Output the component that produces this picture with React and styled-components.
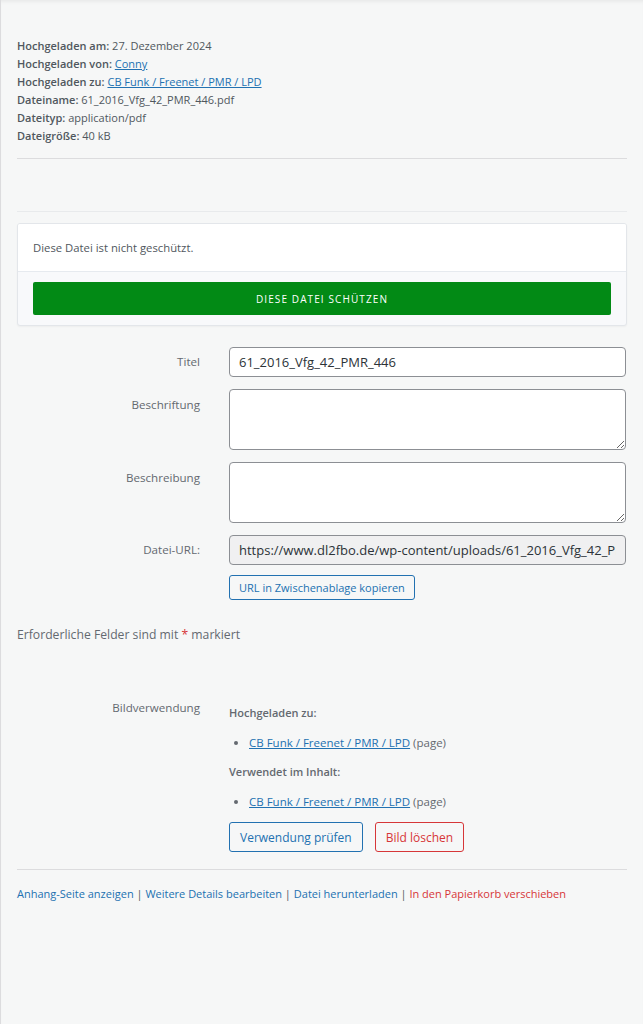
import styled, { createGlobalStyle } from 'styled-components'

const GlobalStyle = createGlobalStyle`
  html, body {
    margin: 0;
    background: #f6f7f7;
    font-family: "Open Sans", "Noto Sans", sans-serif;
    color: #3c434a;
  }
`

const colors = {
  text: '#50575e',
  muted: '#646970',
  link: '#2271b1',
  danger: '#d63638',
  border: '#8c8f94',
}

const Page = styled.div`
  min-height: 1024px;
  box-sizing: border-box;
  border-left: 1px solid #dcdcde;
  padding: 37px 16px 0 16px;
  box-shadow: inset 0 4px 4px -3px rgba(0, 0, 0, 0.08);
`

const Details = styled.div`
  font-size: 11px;
  line-height: 18px;
  color: ${colors.text};
  padding-bottom: 13px;
`

const DetailLine = styled.div`
  strong {
    font-weight: 600;
  }
  a {
    color: ${colors.link};
    text-decoration: underline;
  }
`

const Rule = styled.hr`
  border: 0;
  border-top: 1px solid ${({ $light }) => ($light ? '#e8eaec' : '#dcdcde')};
  margin: 0;
`

const Spacer = styled.div`
  height: ${({ $h }) => $h}px;
`

const Card = styled.div`
  background: #f8f9fb;
  border: 1px solid #e3e6ea;
  border-radius: 3px;
  box-shadow: 0 1px 2px rgba(0, 0, 0, 0.04);
  overflow: hidden;
`

const CardBody = styled.div`
  background: #fff;
  padding: 16px 15px;
  font-size: 11.3px;
  line-height: 15px;
  color: #50575e;
  border-bottom: 1px solid #e6eaef;
`

const CardFooter = styled.div`
  padding: 10px 15px 10px 15px;
`

const ProtectButton = styled.button`
  display: block;
  width: 100%;
  height: 33px;
  border: 0;
  border-radius: 2px;
  background: #028a15;
  color: #fff;
  font-family: inherit;
  font-size: 10px;
  font-weight: 500;
  letter-spacing: 1.1px;
  text-transform: uppercase;
`

const Form = styled.div`
  display: grid;
  grid-template-columns: 183px 1fr;
  column-gap: 29px;
  row-gap: 12px;
  margin-top: 21px;
  padding-right: 1px;
`

const Label = styled.label`
  font-size: 11.6px;
  color: ${colors.muted};
  text-align: right;
  padding-top: ${({ $top }) => $top}px;
`

const Field = styled.div`
  display: flex;
  flex-direction: column;
  align-items: flex-start;
  gap: 10px;
`

const TextInput = styled.input`
  box-sizing: border-box;
  width: 100%;
  height: 30px;
  padding: 0 9px;
  border: 1px solid ${colors.border};
  border-radius: 4px;
  background: ${({ readOnly }) => (readOnly ? '#f0f0f1' : '#fff')};
  font-family: inherit;
  font-size: 13px;
  color: #2c3338;
  outline: none;
`

const TextArea = styled.textarea`
  box-sizing: border-box;
  display: block;
  width: 100%;
  height: 61px;
  border: 1px solid ${colors.border};
  border-radius: 4px;
  background: #fff;
  font-family: inherit;
  font-size: 13px;
  resize: vertical;
  outline: none;
`

const Button = styled.button`
  box-sizing: border-box;
  height: ${({ $small }) => ($small ? 25 : 30)}px;
  padding: 0 ${({ $small }) => ($small ? 9 : 10)}px;
  border: 1px solid ${({ $danger }) => ($danger ? colors.danger : colors.link)};
  border-radius: 3px;
  background: #f6f7f7;
  color: ${({ $danger }) => ($danger ? colors.danger : colors.link)};
  font-family: inherit;
  font-size: ${({ $small }) => ($small ? 11 : 12)}px;
  white-space: nowrap;
`

const Required = styled.p`
  margin: 26px 0 0 0;
  font-size: 12.2px;
  line-height: 18px;
  color: ${colors.muted};

  span {
    color: ${colors.danger};
  }
`

const Usage = styled.div`
  display: grid;
  grid-template-columns: 183px 1fr;
  column-gap: 29px;
  margin-top: 56px;
  padding-bottom: 17px;
`

const UsageHeading = styled.div`
  font-size: 11px;
  font-weight: 600;
  line-height: 16px;
  color: ${colors.muted};
  margin-top: 5px;
`

const UsageList = styled.ul`
  margin: 14px 0 13px 0;
  padding-left: 20px;
  font-size: 11.5px;
  line-height: 16px;
  color: ${colors.muted};

  a {
    color: ${colors.link};
    text-decoration: underline;
  }
`

const ButtonRow = styled.div`
  display: flex;
  gap: 12px;
  margin-top: -1px;
`

const Actions = styled.div`
  padding-top: 15px;
  font-size: 11px;
  line-height: 18px;
  color: ${colors.text};

  a {
    color: ${colors.link};
    text-decoration: none;
  }
  a.delete {
    color: ${colors.danger};
  }
`

const parent = 'CB Funk / Freenet / PMR / LPD'

const details = [
  { label: 'Hochgeladen am:', value: '27. Dezember 2024' },
  { label: 'Hochgeladen von:', value: 'Conny', link: true },
  { label: 'Hochgeladen zu:', value: parent, link: true },
  { label: 'Dateiname:', value: '61_2016_Vfg_42_PMR_446.pdf' },
  { label: 'Dateityp:', value: 'application/pdf' },
  { label: 'Dateigröße:', value: '40 kB' },
]

const actions = [
  { text: 'Anhang-Seite anzeigen' },
  { text: 'Weitere Details bearbeiten' },
  { text: 'Datei herunterladen' },
  { text: 'In den Papierkorb verschieben', danger: true },
]

function App() {
  return (
    <>
      <GlobalStyle />
      <Page>
        <Details>
          {details.map((d) => (
            <DetailLine key={d.label}>
              <strong>{d.label}</strong>{' '}
              {d.link ? <a href="#">{d.value}</a> : d.value}
            </DetailLine>
          ))}
        </Details>
        <Rule />
        <Spacer $h={52} />
        <Rule $light />
        <Spacer $h={11} />
        <Card>
          <CardBody>Diese Datei ist nicht geschützt.</CardBody>
          <CardFooter>
            <ProtectButton>Diese Datei schützen</ProtectButton>
          </CardFooter>
        </Card>

        <Form>
          <Label $top={7}>Titel</Label>
          <Field>
            <TextInput defaultValue="61_2016_Vfg_42_PMR_446" />
          </Field>

          <Label $top={8}>Beschriftung</Label>
          <Field>
            <TextArea />
          </Field>

          <Label $top={8}>Beschreibung</Label>
          <Field>
            <TextArea />
          </Field>

          <Label $top={7}>Datei-URL:</Label>
          <Field>
            <TextInput
              readOnly
              value="https://www.dl2fbo.de/wp-content/uploads/61_2016_Vfg_42_PMR_446.pdf"
            />
            <Button $small>URL in Zwischenablage kopieren</Button>
          </Field>
        </Form>

        <Required>
          Erforderliche Felder sind mit <span>*</span> markiert
        </Required>

        <Usage>
          <Label $top={0}>Bildverwendung</Label>
          <div>
            <UsageHeading>Hochgeladen zu:</UsageHeading>
            <UsageList>
              <li>
                <a href="#">{parent}</a> (page)
              </li>
            </UsageList>
            <UsageHeading>Verwendet im Inhalt:</UsageHeading>
            <UsageList>
              <li>
                <a href="#">{parent}</a> (page)
              </li>
            </UsageList>
            <ButtonRow>
              <Button>Verwendung prüfen</Button>
              <Button $danger>Bild löschen</Button>
            </ButtonRow>
          </div>
        </Usage>
        <Rule />

        <Actions>
          {actions.map((a, i) => (
            <span key={a.text}>
              {i > 0 && ' | '}
              <a href="#" className={a.danger ? 'delete' : undefined}>
                {a.text}
              </a>
            </span>
          ))}
        </Actions>
      </Page>
    </>
  )
}

export default App
